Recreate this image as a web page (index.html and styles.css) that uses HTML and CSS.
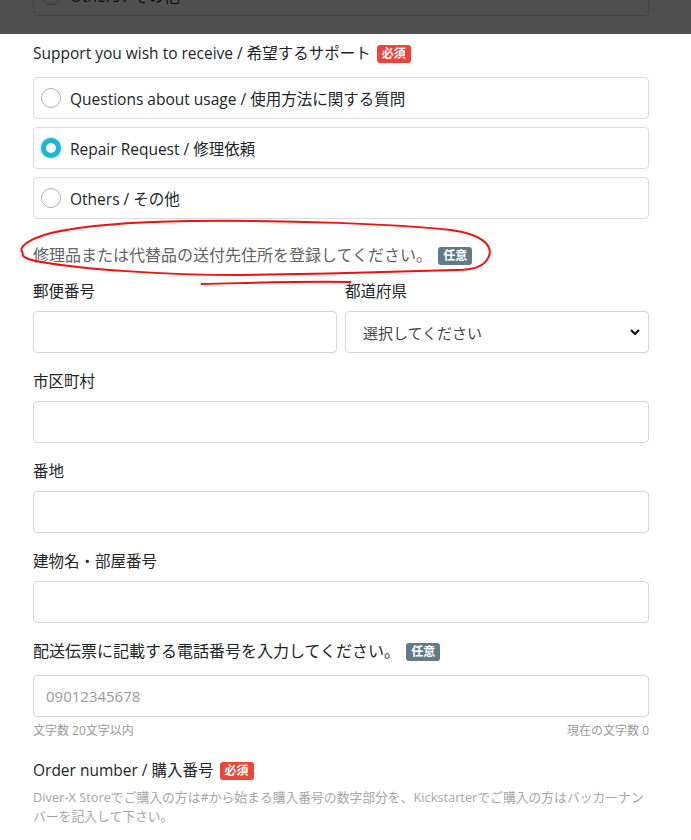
FILE: index.html
```html
<!DOCTYPE html>
<html lang="ja">
  <head>
    <meta charset="UTF-8" />
    <meta name="viewport" content="width=device-width, initial-scale=1.0" />
    <title>サポート申請フォーム</title>
    <link rel="stylesheet" href="styles.css">
  </head>
  <body>
    <div class="dimmed">
      <div class="form-body">
        <label class="option">
          <span class="radio"></span>
          <span>Others / その他</span>
        </label>
      </div>
    </div>

    <form class="form-body">
      <div class="field">
        <div class="field-label">Support you wish to receive / 希望するサポート <span class="badge required">必須</span></div>
        <div class="options">
          <label class="option">
            <span class="radio"></span>
            <span>Questions about usage / 使用方法に関する質問</span>
          </label>
          <label class="option">
            <span class="radio checked"></span>
            <span>Repair Request / 修理依頼</span>
          </label>
          <label class="option">
            <span class="radio"></span>
            <span>Others / その他</span>
          </label>
        </div>
      </div>

      <div class="address">
        <svg class="scribble" width="500" height="72" viewBox="0 0 500 72">
          <path d="M12 36 C6 30 18 22 40 16 C70 9 110 5 180 4 C280 3 385 7 440 13 C470 17 482 28 478 39 C474 50 462 53 445 53 C380 55 300 57 230 58 C150 58 70 52 30 45 C18 43 10 40 12 36"
                fill="none" stroke="#f01010" stroke-width="2" />
          <path d="M190 67 C240 66 290 64 340 65" fill="none" stroke="#f01010" stroke-width="2" />
        </svg>
        <p class="address-note">修理品または代替品の送付先住所を登録してください。 <span class="badge optional">任意</span></p>

        <div class="row">
          <div class="group">
            <div class="field-label">郵便番号</div>
            <input class="input" type="text" />
          </div>
          <div class="group">
            <div class="field-label">都道府県</div>
            <div class="select">
              <span>選択してください</span>
              <svg width="10" height="7" viewBox="0 0 10 7"><path d="M1 1 L5 5 L9 1" fill="none" stroke="#111" stroke-width="2.2" /></svg>
            </div>
          </div>
        </div>

        <div class="group">
          <div class="field-label">市区町村</div>
          <input class="input" type="text" />
        </div>
        <div class="group">
          <div class="field-label">番地</div>
          <input class="input" type="text" />
        </div>
        <div class="group">
          <div class="field-label">建物名・部屋番号</div>
          <input class="input" type="text" />
        </div>
      </div>

      <div class="phone">
        <div class="field-label">配送伝票に記載する電話番号を入力してください。 <span class="badge optional">任意</span></div>
        <input class="input" type="text" placeholder="09012345678" />
        <div class="counter">
          <span>文字数 20文字以内</span>
          <span>現在の文字数 0</span>
        </div>
      </div>

      <div class="field order">
        <div class="field-label">Order number / 購入番号 <span class="badge required">必須</span></div>
        <p class="help">Diver-X Storeでご購入の方は#から始まる購入番号の数字部分を、Kickstarterでご購入の方はバッカーナンバーを記入して下さい。</p>
      </div>
    </form>
  </body>
</html>
```

FILE: styles.css
```css
body {
  margin: 0;
  font-family: "Open Sans", "Noto Sans CJK JP", sans-serif;
  font-size: 15px;
  color: #212529;
  background-color: #fff;
}

.form-body {
  width: 616px;
  margin-left: 33px;
}

.dimmed {
  position: relative;
  height: 34px;
  overflow: hidden;
}

.dimmed .option {
  margin-top: -26px;
}

.dimmed::after {
  content: "";
  position: absolute;
  inset: 0;
  background-color: rgba(0, 0, 0, 0.69);
}

.field-label {
  line-height: 24px;
  font-size: 15.5px;
}

.field {
  padding-top: 7px;
}

.badge {
  display: inline-block;
  font-size: 12px;
  font-weight: bold;
  color: #fff;
  line-height: 18px;
  padding: 0 5px;
  border-radius: 3px;
  vertical-align: 1px;
  margin-left: 2px;
}

.required {
  background-color: #f0443a;
}

.optional {
  background-color: #627b88;
}

.options {
  display: flex;
  flex-direction: column;
  gap: 8px;
  margin-top: 12px;
}

.option {
  display: flex;
  align-items: center;
  gap: 9px;
  height: 42px;
  box-sizing: border-box;
  border: 1px solid #dcdcdc;
  border-radius: 4px;
  padding-left: 7px;
  font-size: 15.5px;
}

.radio {
  width: 20px;
  height: 20px;
  border: 1px solid #a9b3bb;
  border-radius: 50%;
  box-sizing: border-box;
  background-color: #fff;
}

.radio.checked {
  border: 5px solid #1ab6d3;
  box-shadow: 0 0 2px 1px rgba(26, 182, 211, 0.35);
}

.address {
  position: relative;
  margin-top: 24px;
}

.scribble {
  position: absolute;
  left: -22px;
  top: -26px;
  pointer-events: none;
}

.address-note {
  margin: 0 0 12px;
  line-height: 24px;
  font-size: 16px;
  color: #5f6468;
}

.row {
  display: flex;
  gap: 8px;
}

.row .group {
  flex: 1;
}

.group {
  margin-bottom: 16px;
}

.group .field-label {
  margin-bottom: 8px;
}

.input,
.select {
  display: block;
  width: 100%;
  height: 42px;
  box-sizing: border-box;
  border: 1px solid #d6d6d6;
  border-radius: 4px;
  padding: 0 12px;
  font-family: inherit;
  font-size: 15px;
  background-color: #fff;
}

.input::placeholder {
  color: #9a9a9a;
}

.select {
  display: flex;
  align-items: center;
  justify-content: space-between;
  padding: 0 8px 0 17px;
  color: #444;
}

.phone {
  margin-top: 4px;
}

.phone .field-label {
  margin-bottom: 12px;
  font-size: 16px;
}

.counter {
  display: flex;
  justify-content: space-between;
  margin-top: 5px;
  font-size: 12px;
  line-height: 18px;
  color: #9a9a9a;
}

.order {
  padding-top: 18px;
}

.help {
  margin: 6px 0 0;
  font-size: 12.8px;
  line-height: 19px;
  color: #a6a6a6;
}
```
